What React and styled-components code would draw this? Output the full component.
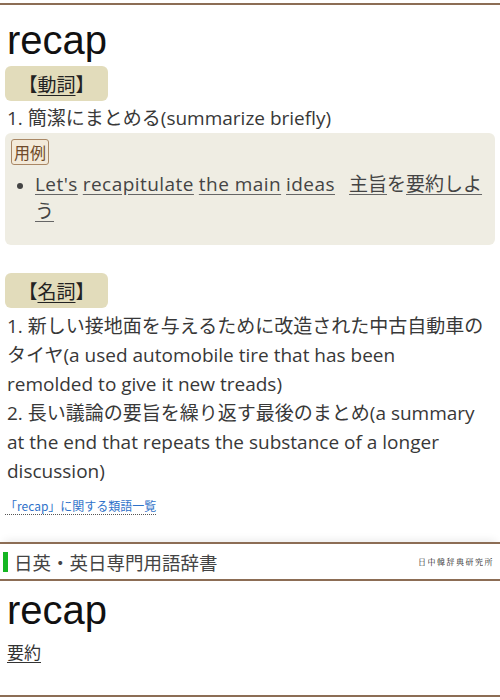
import React from 'react';
import styled, {createGlobalStyle} from 'styled-components';

const GlobalStyle = createGlobalStyle`
html, body {
  margin: 0;
  padding: 0;
  background: #fff;
}
body {
  font-family: "Open Sans", "Noto Sans CJK JP", sans-serif;
  color: #333;
}
`

const Page = styled.div`
width: 500px;
padding-top: 3px;
`

const Section = styled.section`
border-top: 2px solid #8c6d55;
padding: 0 5px 0 5px;
`

const Headword = styled.h1`
margin: 0;
padding: ${p => p.$top || 12}px 0 0 2px;
font-family: "Liberation Sans", "Noto Sans CJK JP", sans-serif;
font-size: 40px;
font-weight: 400;
line-height: 46px;
color: #111;
`

const Pos = styled.div`
display: inline-flex;
align-items: center;
justify-content: center;
width: 103px;
height: 35px;
margin-top: ${p => p.$top || 3}px;
background: #e2dcbb;
border-radius: 6px;
font-family: "Noto Sans CJK JP", sans-serif;
font-size: 19px;
color: #222;

u {
  text-decoration-thickness: 1px;
  text-underline-offset: 3px;
}
`

const Def = styled.div`
font-size: 19px;
line-height: 29px;
color: #383838;
padding: 0 10px 0 2px;
margin-top: ${p => p.$top || 0}px;
`

const ExampleBox = styled.div`
margin-top: 0;
background: #efede3;
border-radius: 6px;
padding: 6px 6px 20px 6px;
`

const Label = styled.span`
display: inline-block;
border: 1px solid #a98765;
border-radius: 3px;
background: #f3ead9;
color: #6f4a2a;
font-family: "Noto Sans CJK JP", sans-serif;
font-size: 16px;
line-height: 24px;
padding: 0 2px;
`

const ExList = styled.ul`
margin: 6px 0 0 0;
padding: 0 0 0 24px;
font-size: 19px;
line-height: 27px;
color: #444;
list-style: disc;

li::marker {
  font-size: 16px;
}
`

const Word = styled.span`
text-decoration: underline;
text-decoration-color: #666;
text-underline-offset: 3px;
letter-spacing: ${p => (p.$latin ? '0.45px' : '0')};
`

const Spacer = styled.span`
display: inline-block;
width: 14px;
`

const Related = styled.a`
display: inline-block;
margin-top: 12px;
margin-bottom: 27px;
font-family: "Noto Sans CJK JP", sans-serif;
font-size: 12px;
color: #2f72c9;
text-decoration: none;
border-bottom: 1px dotted #555;
line-height: 16px;
`

const DictHeader = styled.div`
display: flex;
align-items: center;
justify-content: space-between;
height: 35px;
border-top: 2px solid #8c6d55;
border-bottom: 2px solid #8c6d55;
box-shadow: 0 -6px 8px -4px rgba(0,0,0,0.08);
padding: 0 6px 0 3px;
`

const DictName = styled.div`
display: flex;
align-items: center;
gap: 6px;
font-family: "Noto Sans CJK JP", sans-serif;
font-size: 18.5px;
color: #444;

&::before {
  content: "";
  display: block;
  width: 5px;
  height: 20px;
  background: #14b622;
}
`

const Publisher = styled.div`
font-family: "Noto Serif CJK JP", "Liberation Serif", serif;
font-size: 8px;
letter-spacing: 1.5px;
color: #222;
`

const Bottom = styled.div`
padding: 0 5px 31px 5px;
border-bottom: 2px solid #8c6d55;
box-shadow: 0 6px 8px -4px rgba(0,0,0,0.08);
`

const Trans = styled.div`
font-family: "Noto Sans CJK JP", sans-serif;
font-size: 17px;
color: #333;
margin-top: 6px;
padding-left: 2px;

u {
  text-underline-offset: 3px;
}
`

export default function App() {
  return (
    <Page>
      <GlobalStyle/>
      <Section>
        <Headword>recap</Headword>
        <Pos>【<u>動詞</u>】</Pos>
        <Def $top={3}>1. 簡潔にまとめる(summarize briefly)</Def>
        <ExampleBox>
          <Label>用例</Label>
          <ExList>
            <li>
              <Word $latin>Let's</Word> <Word $latin>recapitulate</Word> <Word $latin>the main</Word> <Word $latin>ideas</Word>
              <Spacer/>
              <Word>主旨</Word>を<Word>要約しよう</Word>
            </li>
          </ExList>
        </ExampleBox>
        <Pos $top={28}>【<u>名詞</u>】</Pos>
        <Def $top={4}>
          1. 新しい接地面を与えるために改造された中古自動車のタイヤ(a used automobile tire that has been remolded to give it new treads)
        </Def>
        <Def>
          2. 長い議論の要旨を繰り返す最後のまとめ(a summary at the end that repeats the substance of a longer discussion)
        </Def>
        <Related href="#">「recap」に関する類語一覧</Related>
      </Section>
      <DictHeader>
        <DictName>日英・英日専門用語辞書</DictName>
        <Publisher>日中韓辞典研究所</Publisher>
      </DictHeader>
      <Bottom>
        <Headword $top={6}>recap</Headword>
        <Trans><u>要約</u></Trans>
      </Bottom>
    </Page>
  );
}
